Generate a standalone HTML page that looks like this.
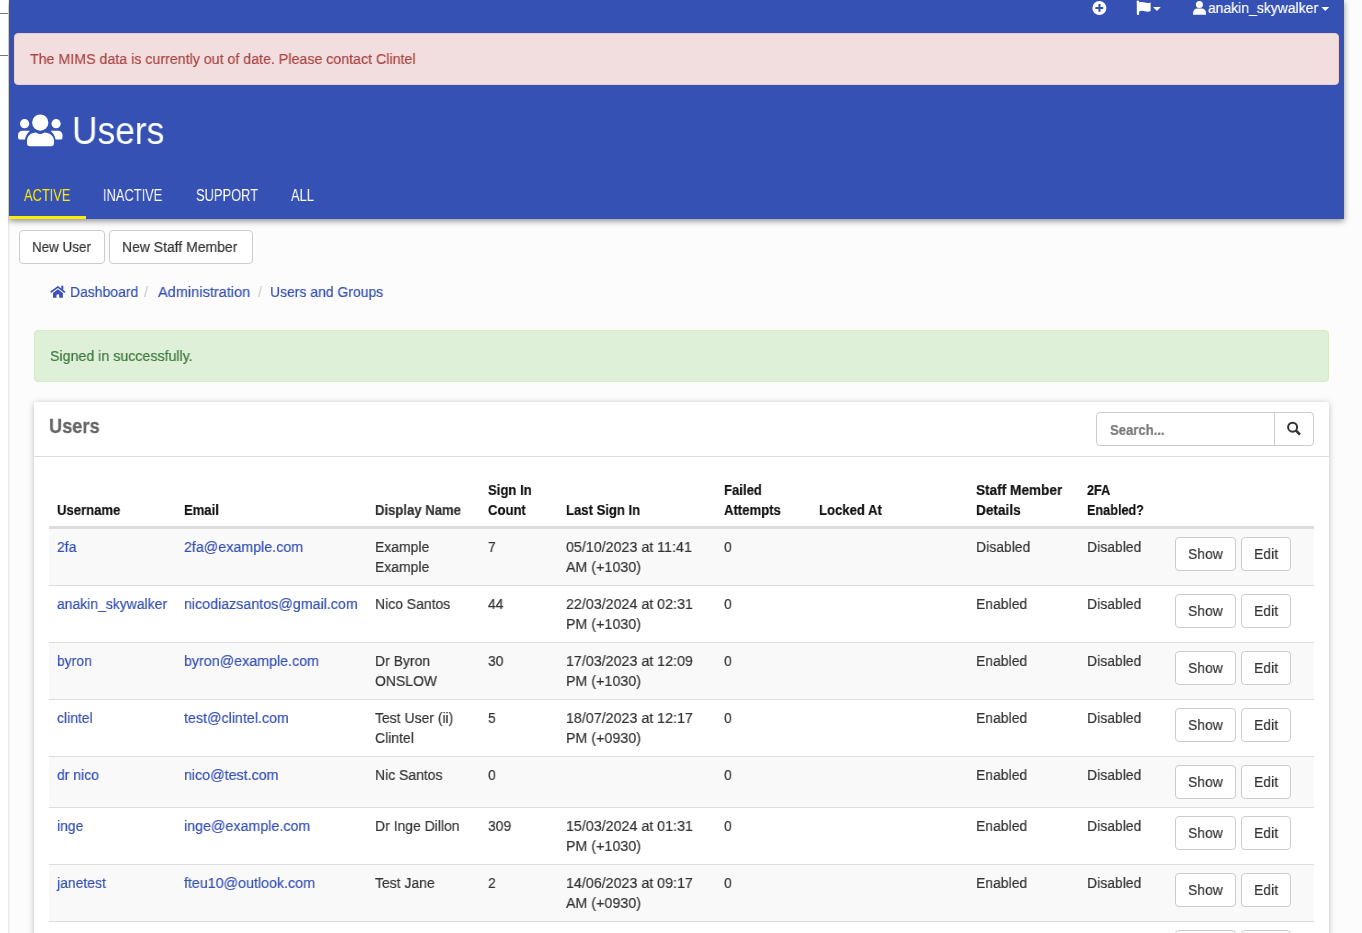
<!DOCTYPE html>
<html><head><meta charset="utf-8">
<style>
*{box-sizing:border-box;margin:0;padding:0}
html,body{width:1362px;height:933px;overflow:hidden}
body{background:#fcfcfc;font-family:"Liberation Sans",sans-serif;font-size:15.5px;line-height:20px;color:#333;position:relative}
.t{display:inline-block;transform:scaleX(0.9);transform-origin:0 0;white-space:nowrap;will-change:transform;-webkit-text-stroke-width:.2px}
.em{transform:scaleX(.92)!important}
.dt{transform:scaleX(.92)!important}
.tb{display:inline-block;transform:scaleX(0.845);transform-origin:0 0;white-space:nowrap;will-change:transform;-webkit-text-stroke-width:.2px}
.abs{position:absolute;white-space:nowrap}
.strip{position:absolute;left:0;top:0;width:8px;height:933px;background:#fff;z-index:5}
.sline{position:absolute;left:8px;top:219px;width:1px;height:714px;background:#e9e9e9;box-shadow:1px 0 1px rgba(0,0,0,.04)}
.strip i{position:absolute;left:0;width:8px;height:1px;background:#777}
.hdr{position:absolute;left:9px;top:0;width:1335px;height:219px;background:#3551b4;box-shadow:0 2px 6px rgba(0,0,0,.45)}
.alert-d{position:absolute;left:5px;top:33px;width:1325px;height:52px;background:#f2dede;border:1px solid #ebccd1;border-radius:4px}
.h1{position:absolute;left:63px;top:109px;color:#fff;font-size:38px;line-height:44px;transform:scaleX(.93);transform-origin:0 0;will-change:transform}
.tab{position:absolute;top:185px;color:#fff;font-size:16.5px;line-height:20px;transform:scaleX(0.78);transform-origin:0 0;will-change:transform}
.ul{position:absolute;left:0;top:216px;width:77px;height:3px;background:#ffeb00}
.btn{position:absolute;height:34px;background:#fff;border:1px solid #ccc;border-radius:4px;color:#333}
.btn .t{position:absolute;top:6px}
.lnk{color:#3550b4}
.sep{color:#ccc}
.alert-s{position:absolute;left:34px;top:330px;width:1295px;height:52px;background:#dff0d8;border:1px solid #d6e9c6;border-radius:4px}
.panel{position:absolute;left:34px;top:402px;width:1295px;height:600px;background:#fff;border-radius:2px;box-shadow:0 1px 6px rgba(0,0,0,.25)}
.ph{position:absolute;left:0;top:0;width:100%;height:55px;border-bottom:1px solid #ddd}
.search{position:absolute;left:1062px;top:10px;width:218px;height:34px;border:1px solid #ccc;border-radius:4px;background:#fff}
.search .div{position:absolute;left:177px;top:0;width:1px;height:32px;background:#ccc}
table{position:absolute;left:15px;top:69px;width:1265px;border-collapse:collapse;table-layout:fixed}
th{font-weight:bold;text-align:left;vertical-align:bottom;padding:9px 8px 6px 8px;line-height:20px;border-bottom:3px solid #ddd;color:#111;white-space:nowrap}
td{vertical-align:top;padding:8px;line-height:20px;border-top:1px solid #ddd;color:#333;white-space:nowrap}
tbody tr:nth-child(odd) td{background:#f9f9f9}
tbody tr:first-child td{border-top:0}
a{color:#3550b4;text-decoration:none}
td.act{padding:8px 0 0 8px;font-size:0;line-height:0}
.rb{display:inline-block;position:relative;vertical-align:top;height:34px;width:61px;border:1px solid #ccc;border-radius:4px;background:#fff;font-size:15.5px;line-height:20px;color:#333}
.rb .t{position:absolute;left:12px;top:6px}
.rb.e{width:50px;margin-left:5px}
</style></head><body>
<div class="sline"></div><div class="strip"><i style="top:13px"></i><i style="top:55px"></i></div>
<div class="hdr">
  <div class="alert-d"></div>
  <div class="h1">Users</div>
  <div class="ul"></div>
</div>
<div class="abs t" style="left:1208px;top:-2px;color:#fff">anakin_skywalker</div>
<div class="abs t" style="left:30px;top:49px;color:#a94442;transform:scaleX(.917)">The MIMS data is currently out of date. Please contact Clintel</div>
<div class="tab" style="left:24px;color:#ffeb00">ACTIVE</div>
<div class="tab" style="left:103px">INACTIVE</div>
<div class="tab" style="left:196px">SUPPORT</div>
<div class="tab" style="left:291px">ALL</div>
<div class="btn" style="left:19px;top:230px;width:86px"><span class="t" style="left:12px;transform:scaleX(.865)">New User</span></div>
<div class="btn" style="left:109px;top:230px;width:144px"><span class="t" style="left:12px">New Staff Member</span></div>
<div class="abs t lnk" style="left:70px;top:282px">Dashboard</div>
<div class="abs t sep" style="left:144px;top:282px">/</div>
<div class="abs t lnk" style="left:158px;top:282px;transform:scaleX(.94)">Administration</div>
<div class="abs t sep" style="left:258px;top:282px">/</div>
<div class="abs t lnk" style="left:270px;top:282px">Users and Groups</div>
<div class="alert-s"></div>
<div class="abs t" style="left:50px;top:346px;color:#3c763d;transform:scaleX(.917)">Signed in successfully.</div>
<div class="panel">
  <div class="ph">
    <div class="abs tb" style="left:15px;top:11.5px;font-size:21px;font-weight:bold;color:#666;line-height:24px;transform:scaleX(.867);-webkit-text-stroke-width:.3px">Users</div>
    <div class="search"><div class="div"></div>
      <div class="abs tb" style="left:13px;top:7px;color:#777;font-weight:bold">Search...</div>
    </div>
  </div>
  <table>
    <colgroup><col style="width:127px"><col style="width:191px"><col style="width:113px"><col style="width:78px"><col style="width:158px"><col style="width:95px"><col style="width:157px"><col style="width:111px"><col style="width:88px"><col style="width:147px"></colgroup>
    <thead><tr><th><span class="tb">Username</span></th><th><span class="tb">Email</span></th><th style="color:#333"><span class="tb">Display Name</span></th><th><span class="tb">Sign In<br>Count</span></th><th><span class="tb">Last Sign In</span></th><th><span class="tb">Failed<br>Attempts</span></th><th><span class="tb">Locked At</span></th><th><span class="tb" style="transform:scaleX(.878)">Staff Member<br>Details</span></th><th><span class="tb" style="transform:scaleX(.816)">2FA<br>Enabled?</span></th><th></th></tr></thead>
    <tbody>
<tr style="height:56px"><td><a><span class="t">2fa</span></a></td><td><a><span class="t em">2fa@example.com</span></a></td><td><span class="t">Example<br>Example</span></td><td><span class="t">7</span></td><td><span class="t dt">05/10/2023 at 11:41<br>AM (+1030)</span></td><td><span class="t">0</span></td><td></td><td><span class="t">Disabled</span></td><td><span class="t">Disabled</span></td><td class="act"><span class="rb"><span class="t">Show</span></span><span class="rb e"><span class="t">Edit</span></span></td></tr>
<tr style="height:56px"><td><a><span class="t">anakin_skywalker</span></a></td><td><a><span class="t em">nicodiazsantos@gmail.com</span></a></td><td><span class="t">Nico Santos</span></td><td><span class="t">44</span></td><td><span class="t dt">22/03/2024 at 02:31<br>PM (+1030)</span></td><td><span class="t">0</span></td><td></td><td><span class="t">Enabled</span></td><td><span class="t">Disabled</span></td><td class="act"><span class="rb"><span class="t">Show</span></span><span class="rb e"><span class="t">Edit</span></span></td></tr>
<tr style="height:56px"><td><a><span class="t">byron</span></a></td><td><a><span class="t em">byron@example.com</span></a></td><td><span class="t">Dr Byron<br>ONSLOW</span></td><td><span class="t">30</span></td><td><span class="t dt">17/03/2023 at 12:09<br>PM (+1030)</span></td><td><span class="t">0</span></td><td></td><td><span class="t">Enabled</span></td><td><span class="t">Disabled</span></td><td class="act"><span class="rb"><span class="t">Show</span></span><span class="rb e"><span class="t">Edit</span></span></td></tr>
<tr style="height:56px"><td><a><span class="t">clintel</span></a></td><td><a><span class="t em">test@clintel.com</span></a></td><td><span class="t">Test User (ii)<br>Clintel</span></td><td><span class="t">5</span></td><td><span class="t dt">18/07/2023 at 12:17<br>PM (+0930)</span></td><td><span class="t">0</span></td><td></td><td><span class="t">Enabled</span></td><td><span class="t">Disabled</span></td><td class="act"><span class="rb"><span class="t">Show</span></span><span class="rb e"><span class="t">Edit</span></span></td></tr>
<tr style="height:51px"><td><a><span class="t">dr nico</span></a></td><td><a><span class="t em">nico@test.com</span></a></td><td><span class="t">Nic Santos</span></td><td><span class="t">0</span></td><td></td><td><span class="t">0</span></td><td></td><td><span class="t">Enabled</span></td><td><span class="t">Disabled</span></td><td class="act"><span class="rb"><span class="t">Show</span></span><span class="rb e"><span class="t">Edit</span></span></td></tr>
<tr style="height:56px"><td><a><span class="t">inge</span></a></td><td><a><span class="t em">inge@example.com</span></a></td><td><span class="t">Dr Inge Dillon</span></td><td><span class="t">309</span></td><td><span class="t dt">15/03/2024 at 01:31<br>PM (+1030)</span></td><td><span class="t">0</span></td><td></td><td><span class="t">Enabled</span></td><td><span class="t">Disabled</span></td><td class="act"><span class="rb"><span class="t">Show</span></span><span class="rb e"><span class="t">Edit</span></span></td></tr>
<tr style="height:56px"><td><a><span class="t">janetest</span></a></td><td><a><span class="t em">fteu10@outlook.com</span></a></td><td><span class="t">Test Jane</span></td><td><span class="t">2</span></td><td><span class="t dt">14/06/2023 at 09:17<br>AM (+0930)</span></td><td><span class="t">0</span></td><td></td><td><span class="t">Enabled</span></td><td><span class="t">Disabled</span></td><td class="act"><span class="rb"><span class="t">Show</span></span><span class="rb e"><span class="t">Edit</span></span></td></tr>
<tr style="height:56px"><td><a><span class="t">kate</span></a></td><td><a><span class="t em">kate@example.com</span></a></td><td><span class="t">Kate Smith</span></td><td><span class="t">12</span></td><td><span class="t dt">01/02/2024 at 10:00<br>AM (+1030)</span></td><td><span class="t">0</span></td><td></td><td><span class="t">Enabled</span></td><td><span class="t">Disabled</span></td><td class="act"><span class="rb"><span class="t">Show</span></span><span class="rb e"><span class="t">Edit</span></span></td></tr>
    </tbody>
  </table>
</div>
<svg class="abs" style="left:0;top:0" width="1362" height="933" viewBox="0 0 1362 933">
  <g fill="#fff">
    <circle cx="40.25" cy="122.6" r="8.1"/>
    <circle cx="24.6" cy="123.7" r="4.6"/>
    <circle cx="56.1" cy="123.7" r="4.6"/>
    <path d="M27,142.5 L27,141 C27,136 31,132.5 36,132.5 C38,133.5 39.5,134 40.25,134 C41,134 42.5,133.5 44.5,132.5 C49.5,132.5 54,136 54,141 L54,143 Q54,146.2 51,146.2 L30,146.2 Q27,146.2 27,143 Z"/>
    <path d="M22.5,130.7 L30,130.7 C27.5,132.7 25.5,135.6 25,139.6 L20.5,139.6 Q18,139.6 18,137 L18,135 C18,132.5 20,130.7 22.5,130.7 Z"/>
    <path d="M58,130.7 L50.5,130.7 C53,132.7 55,135.6 55.5,139.6 L60,139.6 Q62.5,139.6 62.5,137 L62.5,135 C62.5,132.5 60.5,130.7 58,130.7 Z"/>
  </g>
  <circle cx="1099.4" cy="8" r="7" fill="#fff"/>
  <path d="M1095.4,6.9 h7.8 v2.1 h-7.8z M1098.45,3.9 h2.1 v7.9 h-2.1z" fill="#3551b4"/>
  <g fill="#fff">
    <circle cx="1137.9" cy="1.8" r="1.3"/>
    <rect x="1136.8" y="1.5" width="2.3" height="13.5" rx="1"/>
    <path d="M1139,2.4 C1141,1.6 1143,1.8 1145,2.6 C1147,3.2 1149,3.1 1150.6,2.4 L1150.6,11 C1149,11.8 1147,11.9 1145,11.2 C1143,10.5 1141,10.5 1139,11.4 Z"/>
  </g>
  <path d="M1153,7 h7.8 l-3.9,3.9z" fill="#fff"/>
  <g fill="#fff">
    <circle cx="1199.4" cy="4.4" r="3.5"/>
    <path d="M1193,14.8 L1193,13 C1193,10.3 1195,8.5 1197.5,8.5 L1201.5,8.5 C1204,8.5 1206,10.3 1206,13 L1206,14.8 Z"/>
  </g>
  <path d="M1321.4,7 h7.8 l-3.9,3.9z" fill="#fff"/>
  <g fill="#3f51b5">
    <path d="M50.2,291.6 L57.9,285.9 L65.4,291.6 L64.5,292.9 L57.9,287.9 L51.1,292.9 Z"/>
    <rect x="61.3" y="285.7" width="2" height="4"/>
    <path d="M53,293.1 L57.9,289.2 L62.9,293.1 L62.9,297.7 L59.2,297.7 L59.2,295.5 Q59.2,294.2 57.85,294.2 Q56.5,294.2 56.5,295.5 L56.5,297.7 L53,297.7 Z"/>
  </g>
  <g stroke="#333" fill="none">
    <circle cx="1292.6" cy="427.2" r="4.5" stroke-width="2"/>
    <path d="M1296,430.6 L1300,434.6" stroke-width="2.6"/>
  </g>
</svg>
</body></html>
